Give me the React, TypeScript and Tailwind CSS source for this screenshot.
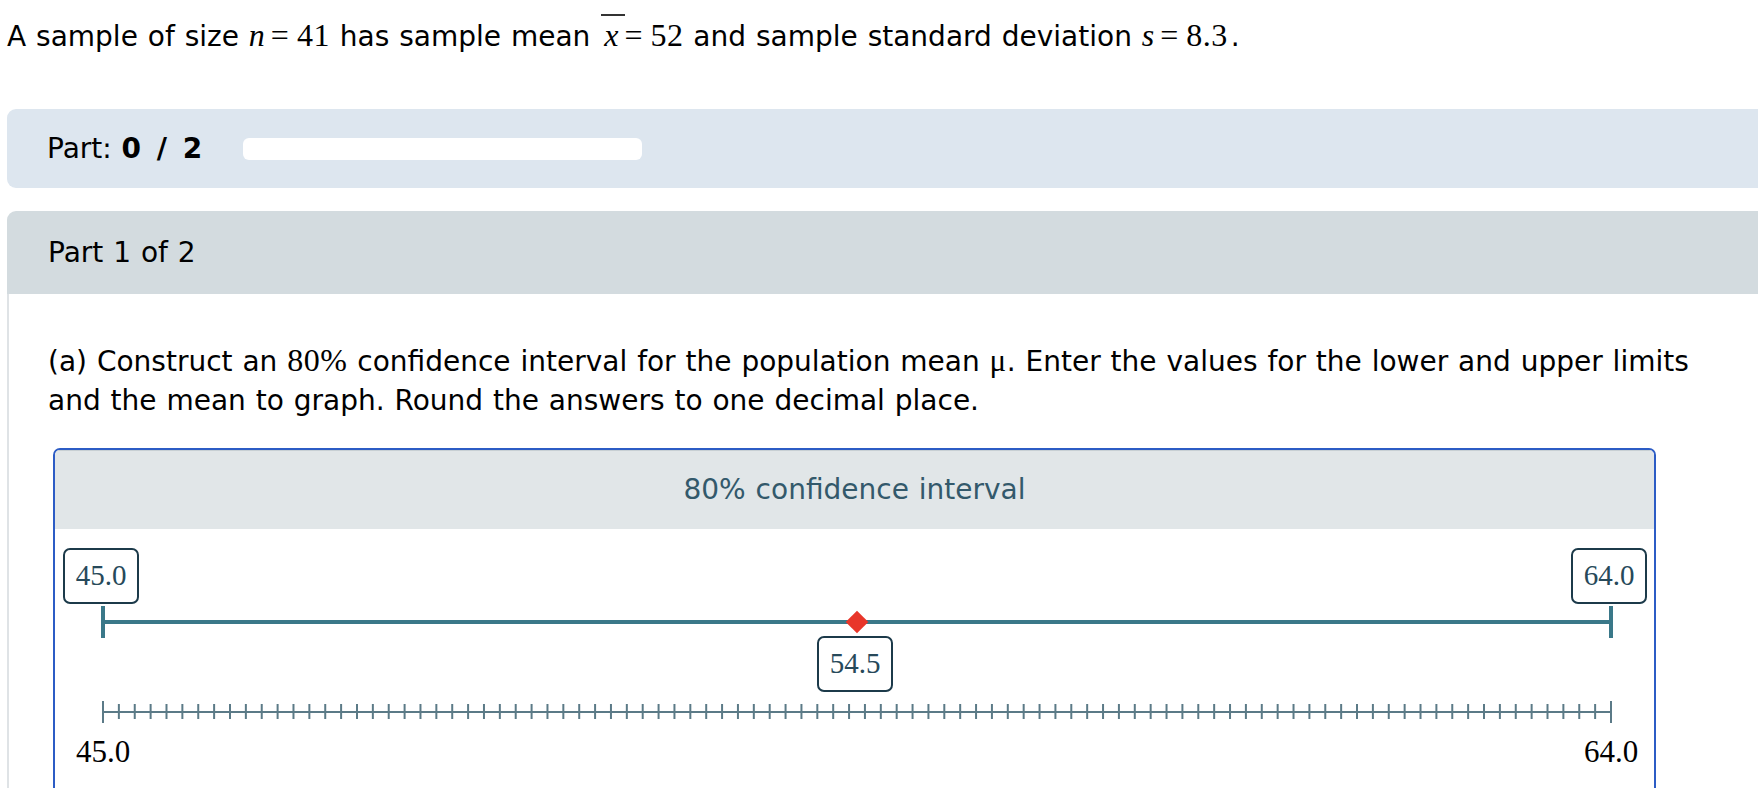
import React from 'react';

const SANS = "font-['DejaVu_Sans','Verdana',sans-serif]";
const SERIF = "font-['Liberation_Serif','Times_New_Roman',serif]";

// chart scale: 45.0 .. 64.0 mapped onto the body of the graph panel
const LO = 45;
const HI = 64;
const X0 = 48;
const X1 = 1556;
const toX = (v: number) => X0 + ((v - LO) / (HI - LO)) * (X1 - X0);

// inline math, rendered in a serif face like the original MathJax output
function M({ children, italic, size = 'text-[32px]' }: { children: React.ReactNode; italic?: boolean; size?: string }) {
  return (
    <span className={`${SERIF} ${size} leading-none [word-spacing:0px] ${italic ? 'italic' : 'tracking-[0.5px]'}`}>
      {children}
    </span>
  );
}

function Eq() {
  return <span className={`${SERIF} text-[32px] leading-none ml-[6px] mr-[8px]`}>=</span>;
}

function XBar() {
  return (
    <span className="relative inline-block ml-[4px]">
      <span className="absolute left-[-3px] w-[24px] top-[-5px] h-[2px] bg-[#333]" />
      <M italic>x</M>
    </span>
  );
}

function ValueBox({ value, left, top }: { value: string; left: number; top: number }) {
  return (
    <div
      className={`absolute w-[76px] h-[56px] border-2 border-[#1c3a4a] rounded-[7px] bg-white flex items-center justify-center ${SERIF} text-[29px] text-[#27495a]`}
      style={{ left: left - 38, top }}
    >
      {value}
    </div>
  );
}

function IntervalChart() {
  const lower = 45.0;
  const upper = 64.0;
  const mean = 54.5;
  const ticks: number[] = [];
  for (let i = 0; i <= 95; i++) ticks.push(toX(LO + i * 0.2));

  return (
    <div className="relative h-[260px]">
      <svg className="absolute left-0 top-0" width={1599} height={260}>
        {/* interval */}
        <line x1={toX(lower)} y1={93} x2={toX(upper)} y2={93} stroke="#3a7889" strokeWidth={4} />
        <line x1={toX(lower)} y1={77} x2={toX(lower)} y2={109} stroke="#3a7889" strokeWidth={4} />
        <line x1={toX(upper)} y1={77} x2={toX(upper)} y2={109} stroke="#3a7889" strokeWidth={4} />
        <rect
          x={toX(mean) - 8}
          y={93 - 8}
          width={16}
          height={16}
          fill="#e8362a"
          transform={`rotate(45 ${toX(mean)} 93)`}
        />
        {/* number line */}
        <line x1={X0} y1={183} x2={X1} y2={183} stroke="#5b7a87" strokeWidth={2} />
        {ticks.map((tx, i) => {
          const end = i === 0 || i === ticks.length - 1;
          return (
            <line
              key={i}
              x1={tx}
              x2={tx}
              y1={end ? 172 : 175}
              y2={end ? 194 : 190}
              stroke="#5b7a87"
              strokeWidth={2}
            />
          );
        })}
      </svg>

      <ValueBox value="45.0" left={toX(lower) - 2} top={19} />
      <ValueBox value="64.0" left={toX(upper) - 2} top={19} />
      <ValueBox value="54.5" left={toX(mean) - 2} top={107} />

      <div
        className={`absolute top-[206px] w-[80px] text-center ${SERIF} text-[31px] leading-[34px] text-black`}
        style={{ left: toX(LO) - 40 }}
      >
        45.0
      </div>
      <div
        className={`absolute top-[206px] w-[80px] text-center ${SERIF} text-[31px] leading-[34px] text-black`}
        style={{ left: toX(HI) - 40 }}
      >
        64.0
      </div>
    </div>
  );
}

export default function App() {
  return (
    <div className={`w-[1758px] h-[788px] overflow-hidden bg-white text-black ${SANS} text-[28px] [word-spacing:1px]`}>
      {/* problem statement */}
      <div className="h-[72px] flex items-center pl-[7px]">
        <p className="whitespace-nowrap leading-[32px]">
          A sample of size <M italic>n</M>
          <Eq />
          <M>41</M> has sample mean <XBar />
          <Eq />
          <M>52</M> and sample standard deviation <M italic>s</M>
          <Eq />
          <M>8.3</M>
          <span className="ml-[3px]">.</span>
        </p>
      </div>

      {/* progress */}
      <div className="mt-[37px] ml-[7px] w-[1800px] h-[79px] rounded-l-[9px] bg-[#dde6ef] flex items-center pl-[40px]">
        <div className="w-[196px] whitespace-nowrap">
          Part: <span className="font-bold tracking-[1px] [word-spacing:4px]">0 / 2</span>
        </div>
        <div className="w-[399px] h-[22px] rounded-[6px] bg-white" />
      </div>

      {/* part 1 */}
      <div className="mt-[23px] ml-[7px] w-[1800px]">
        <div className="h-[83px] rounded-tl-[9px] bg-[#d3dbdf] flex items-center pl-[41px]">Part 1 of 2</div>
        <div className="border-l-2 border-[#dfe3e6] pl-[39px] pt-[48px] h-[600px]">
          <p className="leading-[39px] whitespace-nowrap">
            (a) Construct an <M size="text-[32px]">80%</M> confidence interval for the population mean{' '}
            <M size="text-[31px]">μ</M>. Enter the values for the lower and upper limits
            <br />
            and the mean to graph. Round the answers to one decimal place.
          </p>

          <div className="mt-[28px] ml-[5px] w-[1603px] border-2 border-b-0 border-[#2c5cc5] rounded-t-[7px] overflow-hidden">
            <div className="h-[79px] bg-[#e1e6e8] border-t border-[#c7cfd3] flex items-center justify-center text-[#33596b]">
              80% confidence interval
            </div>
            <IntervalChart />
          </div>
        </div>
      </div>
    </div>
  );
}
